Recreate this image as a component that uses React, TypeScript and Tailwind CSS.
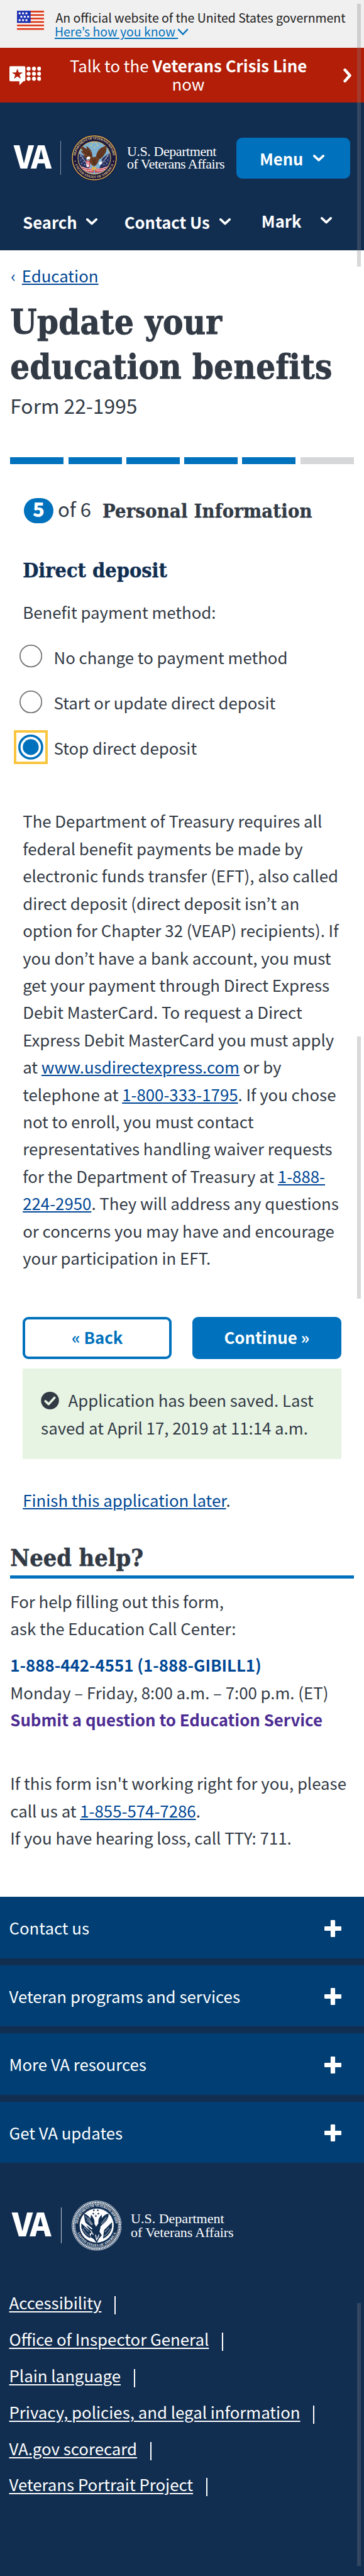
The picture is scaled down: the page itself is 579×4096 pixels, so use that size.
import type { ReactNode } from "react";

function Flag() {
  const stars = [
    [3, 3], [9, 3], [15, 3],
    [6, 9], [12, 9], [18, 9],
    [3, 15], [9, 15], [15, 15],
  ];
  return (
    <svg viewBox="0 0 48 34" className="h-[30.7px] w-[43.4px]">
      <rect width="48" height="34" fill="#fff" />
      {[0, 6.1, 12.2, 18.3, 24.4, 30.6].map((y) => (
        <rect key={y} y={y} width="48" height="3.2" fill="#db3e1f" />
      ))}
      <rect width="24" height="21.5" fill="#1e33b1" />
      {stars.map(([x, y]) => (
        <rect key={`${x}-${y}`} x={x} y={y} width="3.3" height="3.3" fill="#fff" />
      ))}
    </svg>
  );
}

function CrisisIcon() {
  return (
    <svg viewBox="0 0 56 34" className="h-[30.7px] w-[50.6px]" fill="#fff">
      <path d="M2 0.2h24a2 2 0 0 1 2 2v22.600a2 2 0 0 1-2 2h-1.500l-7 7v-7H2a2 2 0 0 1-2-2V2.200a2 2 0 0 1 2-2z" />
      <path
        fill="#b21e08"
        d="M14 4.500l2.400 6.800h7.200l-5.800 4.300 2.200 6.900-6-4.200-6 4.200 2.200-6.900-5.800-4.300h7.200z"
      />
      {[4.7, 13.7, 22.4].map((y) =>
        [33.8, 43.2, 52.4].map((x) => <circle key={`${x}-${y}`} cx={x} cy={y} r="3.5" />)
      )}
    </svg>
  );
}

function Caret({ className = "" }: { className?: string }) {
  return (
    <svg viewBox="0 0 20 12" className={`h-[11px] w-[18px] shrink-0 ${className}`} fill="none">
      <path d="M2 2l8 7.400 8-7.400" stroke="#fff" strokeWidth="4" strokeLinecap="round" strokeLinejoin="round" />
    </svg>
  );
}

function ColorSeal() {
  return (
    <svg viewBox="0 0 82 82" className="ml-[16px] h-[74px] w-[74px] shrink-0">
      <defs>
        <path id="sealTop" d="M8.400 47.500A33.200 33.200 0 1 1 73.600 47.500" />
        <path id="sealBottom" d="M5.500 46A35.900 35.900 0 0 0 76.500 46" />
        <clipPath id="sealInner">
          <circle cx="41" cy="41" r="28.200" />
        </clipPath>
      </defs>
      <circle cx="41" cy="41" r="41" fill="#1b1740" />
      <circle cx="41" cy="41" r="38.800" fill="#1b1740" stroke="#dfb84c" strokeWidth="1.600" />
      <circle cx="41" cy="41" r="28.900" fill="#7fb3d3" stroke="#dfb84c" strokeWidth="1.100" />
      <text fill="#e6cf86" fontSize="5.800" fontWeight="700" fontFamily="Liberation Serif, serif">
        <textPath href="#sealTop" startOffset="50%" textAnchor="middle" textLength="96">
          DEPARTMENT OF VETERANS AFFAIRS
        </textPath>
      </text>
      <text fill="#e6cf86" fontSize="5.800" fontWeight="700" fontFamily="Liberation Serif, serif">
        <textPath href="#sealBottom" startOffset="50%" textAnchor="middle" textLength="88">
          UNITED STATES OF AMERICA
        </textPath>
      </text>
      <circle cx="7.200" cy="47" r="0.900" fill="#e6cf86" />
      <circle cx="74.800" cy="47" r="0.900" fill="#e6cf86" />
      <g clipPath="url(#sealInner)">
        <path d="M12 30l15 12 5 18-8 3-12-14z" fill="#27305f" />
        <path d="M70 30L55 42l-5 18 8 3 12-14z" fill="#27305f" />
        <path d="M13 30l15 22M69 30L54 52" stroke="#d9dfe8" strokeWidth="1" />
        <path d="M16 54q9 7 24 5v8Q24 68 16 54zM66 54q-9 7-24 5v8q16 1 24-13z" fill="#c9384a" />
        <path d="M19 57q9 5 19 4M22 61q7 4 15 3M63 57q-9 5-19 4M60 61q-7 4-15 3" stroke="#fff" strokeWidth="1.100" fill="none" />
        {[[17, 38], [20, 42], [17, 45], [22, 48], [19, 51], [65, 38], [62, 42], [65, 45], [60, 48], [63, 51], [58, 53], [24, 53]].map(
          ([x, y]) => (
            <circle key={`${x}-${y}`} cx={x} cy={y} r="0.800" fill="#e5ebf5" />
          )
        )}
      </g>
      <path d="M26 45l8 2-1 11-5-1z" fill="#c9384a" />
      <path d="M28 47l1 9M31 48v9" stroke="#fff" strokeWidth="1.200" />
      <path
        d="M17 20q7 2 11 6l-1-6q8 5 10 13l1 7 6-1q1-10 8-15l10-5q2 10-3 16-3 6-10 9-2 10-9 12-7-4-8-11-8-4-11-9l4 0q-6-3-8-7l4 0q-4-4-4-9z"
        fill="#6b3c22"
      />
      <path d="M22 23l11 13M28 24l7 14M21 29l11 8M56 23L46 39M60 25L48 41M61 30l-12 13M38 44l3 9M42 43l0 11" stroke="#3d2116" strokeWidth="0.900" />
      <path d="M28 40q4-3 6 0l-1 4-3-1-3 1z" fill="#fff" />
      <path d="M49 49l6-3-1 6-4 2z" fill="#f0f3f8" />
      <path d="M37 56l4 2 3-2 1 10-4-6-4 6z" fill="#e0b345" />
      <path d="M26 51l6 4-4 3z" fill="#f0f3f8" />
      {[[38, 14.5], [44, 14.5], [35.5, 19], [46.500, 19], [41, 22.500]].map(([x, y]) => (
        <circle key={`${x}-${y}`} cx={x} cy={y} r="1.200" fill="#ecd15c" />
      ))}
    </svg>
  );
}

function MonoSeal() {
  return (
    <svg viewBox="0 0 88 88" className="ml-[15.500px] h-[79.600px] w-[79.600px] shrink-0">
      <defs>
        <path id="monoTop" d="M11 50.500A33.600 33.600 0 1 1 77 50.500" />
        <path id="monoBottom" d="M8 49A36.300 36.300 0 0 0 80 49" />
      </defs>
      <circle cx="44" cy="44" r="43.300" fill="none" stroke="#fff" strokeWidth="0.900" />
      <circle cx="44" cy="44" r="40.700" fill="none" stroke="#fff" strokeWidth="2.700" strokeDasharray="2 0.900" />
      <circle cx="44" cy="44" r="38.300" fill="none" stroke="#fff" strokeWidth="0.800" />
      <circle cx="44" cy="44" r="30" fill="#fff" />
      <text fill="#fff" fontSize="5.800" fontWeight="700" fontFamily="Liberation Serif, serif">
        <textPath href="#monoTop" startOffset="50%" textAnchor="middle" textLength="98">
          DEPARTMENT OF VETERANS AFFAIRS
        </textPath>
      </text>
      <text fill="#fff" fontSize="5.800" fontWeight="700" fontFamily="Liberation Serif, serif">
        <textPath href="#monoBottom" startOffset="50%" textAnchor="middle" textLength="88">
          UNITED STATES OF AMERICA
        </textPath>
      </text>
      <g fill="#112e51">
        {[[39, 17], [46, 17], [38, 23], [47, 23], [42.500, 27]].map(([x, y]) => (
          <path key={`${x}-${y}`} transform={`translate(${x} ${y})`} d="M0-2.200L.6-.7 2.200-.7 1 .4 1.400 2 0 1.100-1.400 2-1 .4-2.200-.7-.6-.7z" />
        ))}
        <path d="M22 23q8 3 11 9l1-7q7 7 6 16l3 5 4-6q-1-9 6-15l0 6q5-7 12-8 0 10-6 15-4 5-8 7l-2 10 4 6-5 6-4 8-5-7-6-4 1-6-6-3 4-3q-8-7-10-24z" />
        <path d="M17 40l14 12 2 14q-12-4-16-18zM71 38L57 52l-2 15q13-6 16-20z" />
      </g>
      <g stroke="#fff" fill="none">
        <path d="M24 27l12 16M29 30l8 12M65 29L53 43M61 29l-9 12M26 34l9 9M63 36l-9 9" strokeWidth="0.800" />
        <path d="M18 35l18 15M70 34L50 55" strokeWidth="2.200" />
        <path d="M20 50q4 8 11 12M68 50q-4 8-12 13M22 47l8 8M65 48l-7 8" strokeWidth="1.200" strokeDasharray="1.500 1.200" />
        <path d="M33 52l5 8M36 56l-4 5M42 60l2 10M48 60l-3 8" strokeWidth="1.500" />
      </g>
    </svg>
  );
}

function Plus() {
  return (
    <svg viewBox="0 0 30 30" className="mt-[2px] h-[27px] w-[27px]" fill="#fff">
      <rect x="11" width="8" height="30" rx="1.200" />
      <rect y="11" width="30" height="8" rx="1.200" />
    </svg>
  );
}

function Link({ children }: { children: ReactNode }) {
  return (
    <a className="text-[#004795] underline decoration-[1.800px] underline-offset-[2px]">{children}</a>
  );
}

function Radio({ label, checked }: { label: string; checked?: boolean }) {
  return (
    <div className="flex h-[72.300px] items-center">
      <span
        className={`-ml-[14.500px] flex h-[54.300px] w-[54.300px] items-center justify-center border-[4px] ${
          checked ? "border-[#f9c642]" : "border-transparent"
        }`}
      >
        {checked ? (
          <svg viewBox="0 0 44 44" className="h-[39.800px] w-[39.800px] shrink-0">
            <circle cx="22" cy="22" r="20" fill="#fff" stroke="#0071bc" strokeWidth="4" />
            <circle cx="22" cy="22" r="14" fill="#0071bc" />
          </svg>
        ) : (
          <svg viewBox="0 0 40 40" className="h-[36.200px] w-[36.200px] shrink-0">
            <circle cx="20" cy="20" r="19" fill="#fff" stroke="#757575" strokeWidth="2" />
          </svg>
        )}
      </span>
      <span className="ml-[9.500px] pt-[2px]">{label}</span>
    </div>
  );
}

function Scrollbar({ className }: { className: string }) {
  return <div className={`absolute right-[5.500px] w-[5.500px] bg-[#818181]/30 ${className}`} />;
}

const footerSections = ["Contact us", "Veteran programs and services", "More VA resources", "Get VA updates"];
const footerLinks = [
  "Accessibility",
  "Office of Inspector General",
  "Plain language",
  "Privacy, policies, and legal information",
  "VA.gov scorecard",
  "Veterans Portrait Project",
];

export default function App() {
  return (
    <div className="relative h-[4096px] w-[579px] overflow-hidden bg-white font-['Noto_Sans_CJK_KR',sans-serif] text-[25.800px] leading-[43.400px] whitespace-nowrap text-[#323a45]">
      <div className="flex h-[76px] bg-[#f0f0f0] pt-[17px] pl-[27px] text-[19.440px] leading-[21.700px] text-[#212121]">
        <Flag />
        <div className="ml-[16.500px]">
          <div className="pl-[1.500px]">An official website of the United States government</div>
          <div className="flex items-center text-[#0071bc]">
            <a className="underline decoration-[1.800px] underline-offset-[2px]">Here’s how you know&nbsp;</a>
            <svg viewBox="0 0 20 12" className="mt-[2px] -ml-[1px] h-[10.800px] w-[18px]" fill="none">
              <path d="M1.500 1.500L10 10.500l8.500-9" stroke="#0071bc" strokeWidth="2.600" />
            </svg>
          </div>
        </div>
      </div>

      <div className="flex h-[87px] bg-[#b21e08] pt-[14px] pl-[14.500px] text-center leading-[28.900px] text-white">
        <div className="pt-[15px]">
          <CrisisIcon />
        </div>
        <div className="mr-[11px] flex-1">
          Talk to the <b>Veterans Crisis Line</b>
          <br />
          now
        </div>
        <svg viewBox="0 0 18 26" className="mt-[18px] mr-[18px] h-[24px] w-[16px]" fill="none">
          <path d="M4 3l9 10-9 10" stroke="#fff" strokeWidth="5" strokeLinecap="round" strokeLinejoin="round" />
        </svg>
      </div>

      <header className="h-[235px] bg-[#112e51] pt-[50.500px] text-white">
        <div className="flex h-[74px] items-center pl-[22px]">
          <div className="w-[73.500px] pb-[8px] text-[49.400px] leading-[50px] font-black tracking-[-3.500px]">VA</div>
          <div className="h-[54px] w-[1.500px] bg-[#8493a8]" />
          <ColorSeal />
          <div className="ml-[15px] w-[174px] font-['Liberation_Serif',serif] text-[22px] leading-[19.900px]">
            <div className="tracking-[-0.430px]">U.S. Department</div>
            <div className="tracking-[-0.550px]">of Veterans Affairs</div>
          </div>
          <button className="mt-[2px] flex h-[65px] w-[181px] shrink-0 items-center rounded-[9px] bg-[#0071bc] pl-[37px] text-[25.600px] font-bold">
            <span className="w-[84.500px] text-left">Menu</span>
            <Caret />
          </button>
        </div>
        <nav className="mt-[47px] flex h-[36px] items-center pl-[36.300px] text-[25.600px] font-bold">
          <span className="w-[101px]">Search</span>
          <Caret />
          <span className="ml-[42.500px] w-[151px]">Contact Us</span>
          <Caret />
          <span className="mb-[4px] ml-[49px] w-[94px]">Mark</span>
          <Caret className="mb-[4px]" />
        </nav>
      </header>

      <main className="px-[16.300px]">
        <div className="flex pt-[20px] leading-[39px] text-[#004795]">
          <span className="w-[18.500px] pl-[1px]">‹</span>
          <Link>Education</Link>
        </div>
        <h1 className="mt-[20.400px] font-['DejaVu_Serif_Condensed','DejaVu_Serif',serif] text-[54px] leading-[70.500px] font-bold tracking-[0.300px] [-webkit-text-stroke:0.9px_currentColor]">
          Update your
          <br />
          education benefits
        </h1>
        <div className="mt-[6px] text-[31.800px] leading-[40px]">Form 22-1995</div>

        <div className="mt-[62.600px] flex h-[11px] gap-[7.300px]">
          <div className="flex-1 bg-[#0071bc]" />
          <div className="flex-1 bg-[#0071bc]" />
          <div className="flex-1 bg-[#0071bc]" />
          <div className="flex-1 bg-[#0071bc]" />
          <div className="flex-1 bg-[#0071bc]" />
          <div className="flex-1 bg-[#d6d7d9]" />
        </div>

        <div className="px-[19.900px]">
          <div className="mt-[54px] flex h-[40px] items-center text-[31px] leading-[40px]">
            <div className="ml-[1.800px] flex h-[40px] w-[47px] items-center justify-center rounded-[20px] bg-[#0071bc] pb-[5px] font-black text-white">
              5
            </div>
            <span className="ml-[7px] w-[71px] pb-[5px]">of 6</span>
            <span className="font-['DejaVu_Serif_Condensed','DejaVu_Serif',serif] text-[30.500px] font-bold tracking-[0.250px] [-webkit-text-stroke:0.4px_currentColor]">
              Personal Information
            </span>
          </div>

          <h2 className="mt-[55.400px] font-['DejaVu_Serif_Condensed','DejaVu_Serif',serif] text-[32.200px] leading-[40px] font-bold text-[#112e51] [-webkit-text-stroke:0.4px_currentColor]">
            Direct deposit
          </h2>
          <div className="mt-[23.500px]">Benefit payment method:</div>
          <div className="mt-[13px]">
            <Radio label="No change to payment method" />
            <Radio label="Start or update direct deposit" />
            <Radio label="Stop direct deposit" checked />
          </div>

          <p className="mt-[59.300px]">
            The Department of Treasury requires all
            <br />
            federal benefit payments be made by
            <br />
            electronic funds transfer (EFT), also called
            <br />
            direct deposit (direct deposit isn’t an
            <br />
            option for Chapter 32 (VEAP) recipients). If
            <br />
            you don’t have a bank account, you must
            <br />
            get your payment through Direct Express
            <br />
            Debit MasterCard. To request a Direct
            <br />
            Express Debit MasterCard you must apply
            <br />
            at <Link>www.usdirectexpress.com</Link> or by
            <br />
            telephone at <Link>1-800-333-1795</Link>. If you chose
            <br />
            not to enroll, you must contact
            <br />
            representatives handling waiver requests
            <br />
            for the Department of Treasury at <Link>1-888-</Link>
            <br />
            <Link>224-2950</Link>. They will address any questions
            <br />
            or concerns you may have and encourage
            <br />
            your participation in EFT.
          </p>

          <div className="mt-[72.700px] flex h-[67px] gap-[32.600px] font-bold">
            <button className="flex-1 basis-0 rounded-[9px] border-[4px] border-[#0071bc] pb-[3px] leading-[56px] text-[#0071bc]">
              « Back
            </button>
            <button className="flex-1 basis-0 rounded-[9px] border-[4px] border-[#0071bc] bg-[#0071bc] pb-[3px] leading-[56px] text-white">
              Continue »
            </button>
          </div>

          <div className="mt-[14.500px] h-[144.700px] bg-[#e7f4e4] pt-[28.600px] pl-[28.900px]">
            <svg viewBox="0 0 32 31" className="mr-[14.500px] inline-block h-[28px] w-[29px] align-[-3.400px]">
              <ellipse cx="16" cy="15.500" rx="15.800" ry="15.500" fill="#323a45" />
              <path d="M8 16.500l5.500 5.300L24 10.500" fill="none" stroke="#e7f4e4" strokeWidth="4" strokeLinecap="round" strokeLinejoin="round" />
            </svg>
            Application has been saved. Last
            <br />
            saved at April 17, 2019 at 11:14 a.m.
          </div>

          <div className="mt-[43px]">
            <Link>Finish this application later</Link>.
          </div>
        </div>

        <h2 className="mt-[47.300px] font-['DejaVu_Serif_Condensed','DejaVu_Serif',serif] text-[37.600px] leading-[46px] font-bold [-webkit-text-stroke:0.6px_currentColor]">
          Need help?
        </h2>
        <div className="mt-[4.700px] h-[5.400px] bg-[#0071bc]" />
        <p className="mt-[14px]">
          For help filling out this form,
          <br />
          ask the Education Call Center:
        </p>
        <p className="mt-[14.400px]">
          <b className="text-[#004795]">1-888-442-4551 (1-888-GIBILL1)</b>
          <br />
          Monday – Friday, 8:00 a.m. – 7:00 p.m. (ET)
          <br />
          <b className="text-[#4c2c92]">Submit a question to Education Service</b>
        </p>
        <p className="mt-[58px]">
          If this form isn't working right for you, please
          <br />
          call us at <Link>1-855-574-7286</Link>.
          <br />
          If you have hearing loss, call TTY: 711.
        </p>
      </main>

      <footer className="mt-[72.700px] h-[1080px] bg-[#112e51] text-white">
        <div className="flex flex-col gap-[10.850px]">
          {footerSections.map((s) => (
            <div key={s} className="flex h-[97.650px] items-center justify-between bg-[#003e73] pr-[36.200px] pl-[14.500px]">
              <span>{s}</span>
              <Plus />
            </div>
          ))}
        </div>
        <div className="mt-[59.600px] flex h-[79.600px] items-center pl-[19px]">
          <div className="w-[77.500px] pb-[9px] text-[51.400px] leading-[52px] font-black tracking-[-3.500px]">VA</div>
          <div className="h-[57px] w-[1.500px] bg-[#c3cbd5]" />
          <MonoSeal />
          <div className="ml-[15px] font-['Liberation_Serif',serif] text-[22px] leading-[21.900px]">
            <div>U.S. Department</div>
            <div className="tracking-[-0.100px]">of Veterans Affairs</div>
          </div>
        </div>
        <ul className="mt-[53.400px] pl-[14.500px]">
          {footerLinks.map((l) => (
            <li key={l} className="flex h-[57.900px] items-center leading-[57.900px]">
              <a className="underline decoration-[1.800px] underline-offset-[3px]">{l}</a>
              <span className="mt-[9px] ml-[20.500px] h-[29px] w-[2.300px] bg-white" />
            </li>
          ))}
        </ul>
      </footer>

      <Scrollbar className="top-[5.500px] h-[418px]" />
      <Scrollbar className="top-[1647.500px] h-[417.700px]" />
      <Scrollbar className="top-[3662px] h-[418px]" />
    </div>
  );
}
